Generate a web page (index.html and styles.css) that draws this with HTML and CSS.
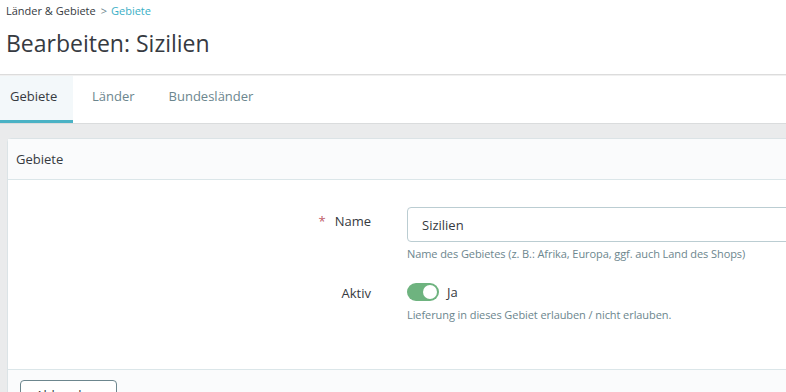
FILE: index.html
```html
<!DOCTYPE html>
<html lang="de">
<head>
<meta charset="utf-8">
<title>Bearbeiten: Sizilien</title>
<link rel="stylesheet" href="styles.css">
</head>
<body>
<div class="page-head">
  <div class="breadcrumb"><span>Länder &amp; Gebiete</span><span class="sep">&gt;</span><span class="crumb-active">Gebiete</span></div>
  <h1 class="title">Bearbeiten: Sizilien</h1>
</div>
<nav class="tabs">
  <a class="tab active">Gebiete</a>
  <a class="tab">Länder</a>
  <a class="tab">Bundesländer</a>
</nav>
<main class="content">
  <section class="card">
    <div class="card-header">Gebiete</div>
    <div class="card-body">
      <div class="form-row">
        <label class="form-label"><span class="req">*</span>Name</label>
        <div class="form-field">
          <input class="input" type="text" value="Sizilien">
          <div class="help">Name des Gebietes (z. B.: Afrika, Europa, ggf. auch Land des Shops)</div>
        </div>
      </div>
      <div class="form-row row-switch">
        <label class="form-label">Aktiv</label>
        <div class="form-field">
          <div class="switch-line">
            <span class="switch"><span class="knob"></span></span>
            <span class="switch-text">Ja</span>
          </div>
          <div class="help">Lieferung in dieses Gebiet erlauben / nicht erlauben.</div>
        </div>
      </div>
    </div>
    <div class="card-footer">
      <button class="btn">Abbrechen</button>
    </div>
  </section>
</main>
</body>
</html>
```
FILE: styles.css
```css
html, body {
  margin: 0;
  padding: 0;
  overflow: hidden;
}
body {
  font-family: "Open Sans", "Noto Sans", sans-serif;
  color: #363a41;
  background: #eaebec;
  width: 786px;
  height: 392px;
}
.page-head {
  background: #fff;
  padding: 3px 6px 0;
  height: 71px;
  border-bottom: 1px solid #dcdcdc;
  box-shadow: 0 1px 0 #f0f0f0;
}
.breadcrumb {
  font-size: 11px;
  line-height: 15px;
  color: #363a41;
}
.breadcrumb .sep {
  color: #6c868e;
  margin: 0 4px 0 5px;
}
.crumb-active {
  color: #3aafc6;
}
.title {
  margin: 10px 0 0;
  font-size: 23px;
  font-weight: 400;
  line-height: 30px;
}
.tabs {
  display: flex;
  background: #fff;
  height: 47px;
  margin-top: 1px;
  border-bottom: 1px solid #dadcdd;
}
.tab {
  font-size: 13px;
  color: #6c868e;
  padding: 0 10px 3px;
  line-height: 41px;
  margin-right: 14px;
  border-bottom: 3px solid transparent;
}
.tab.active {
  color: #363a41;
  background: #f3f8fa;
  border-bottom-color: #4ab2c5;
  width: 53px;
  margin-right: 9px;
}
.content {
  padding: 14px 0 0 7px;
}
.card {
  background: #fff;
  border: 1px solid #dbe3e6;
  width: 900px;
  border-radius: 4px 0 0 0;
}
.card-header {
  background: #fafbfc;
  border-bottom: 1px solid #dbe6e9;
  font-size: 13px;
  line-height: 40px;
  padding: 0 8px;
}
.card-body {
  padding: 27px 0 47px;
}
.form-row {
  display: grid;
  grid-template-columns: 363px 1fr;
  column-gap: 36px;
}
.row-switch {
  margin-top: 22px;
}
.form-label {
  text-align: right;
  font-size: 13px;
  line-height: 16px;
  padding-top: 6px;
}
.row-switch .form-label {
  padding-top: 2px;
}
.req {
  color: #c05c67;
  margin-right: 9px;
}
.input {
  display: block;
  box-sizing: border-box;
  width: 500px;
  height: 35px;
  border: 1px solid #bbcdd2;
  border-radius: 4px;
  padding: 0 14px;
  font-family: inherit;
  font-size: 13px;
  color: #363a41;
  outline: none;
}
.help {
  font-size: 11px;
  letter-spacing: -0.08px;
  color: #6c868e;
  margin-top: 4px;
  line-height: 15px;
}
.switch-line {
  display: flex;
  align-items: center;
  gap: 8px;
  height: 18px;
}
.switch {
  display: flex;
  justify-content: flex-end;
  align-items: center;
  box-sizing: border-box;
  width: 32px;
  height: 18px;
  border-radius: 9px;
  background: #6eb37f;
  padding: 2px;
}
.knob {
  width: 14px;
  height: 14px;
  border-radius: 50%;
  background: #fff;
}
.switch-text {
  font-size: 13px;
}
.row-switch .help {
  margin-top: 6px;
}
.card-footer {
  background: #fafbfc;
  border-top: 1px solid #dbe6e9;
  padding: 10px 12px;
}
.btn {
  font-family: inherit;
  font-size: 13px;
  color: #363a41;
  background: #fff;
  border: 1px solid #6c868e;
  border-radius: 4px;
  width: 97px;
  height: 35px;
  padding: 0 0 6px;
}
```
